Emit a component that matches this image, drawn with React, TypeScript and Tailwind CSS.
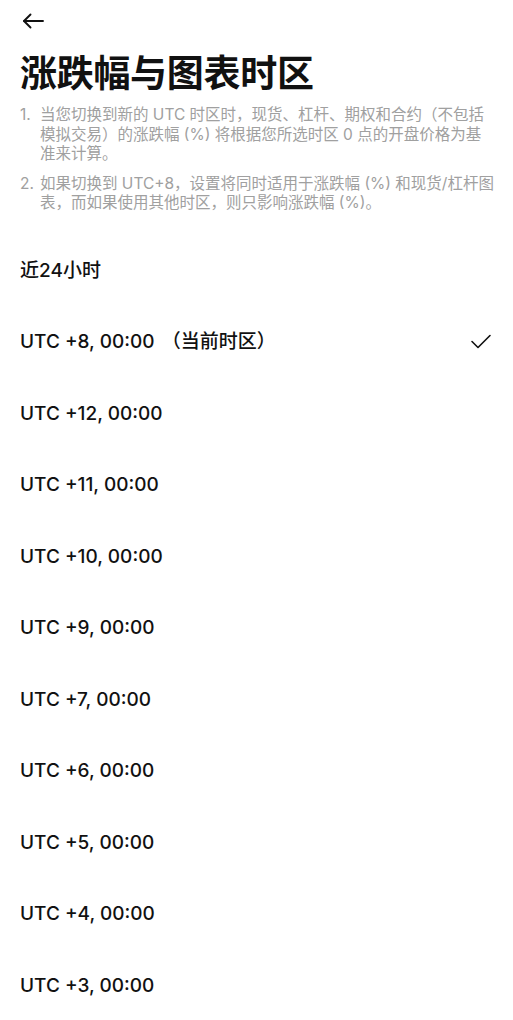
import { type ReactNode } from "react";

const zones = [
  "UTC +12, 00:00",
  "UTC +11, 00:00",
  "UTC +10, 00:00",
  "UTC +9, 00:00",
  "UTC +7, 00:00",
  "UTC +6, 00:00",
  "UTC +5, 00:00",
  "UTC +4, 00:00",
  "UTC +3, 00:00",
];

function BackArrow() {
  return (
    <svg width="22" height="16" viewBox="0 0 22 16" fill="none" stroke="#111" strokeWidth="1.9" strokeLinecap="round" strokeLinejoin="round">
      <path d="M2 8h19" />
      <path d="M8.5 1.5 2 8l6.5 6.5" />
    </svg>
  );
}

function CheckMark() {
  return (
    <svg width="22" height="16" viewBox="0 0 22 16" fill="none" stroke="#111" strokeWidth="1.6" strokeLinecap="round" strokeLinejoin="round">
      <path d="M2 7.5l6 6L20 1.5" />
    </svg>
  );
}

function Note({ n, children }: { n: number; children: ReactNode }) {
  return (
    <li className="flex">
      <span className="w-5 shrink-0">{n}.</span>
      <span className="flex-1">{children}</span>
    </li>
  );
}

function Row({ label, active }: { label: ReactNode; active?: boolean }) {
  return (
    <div className="flex h-[71.5px] items-center justify-between px-5">
      <span className="text-[19px] font-medium text-[#111]">{label}</span>
      {active && (
        <span className="mr-[1px]">
          <CheckMark />
        </span>
      )}
    </div>
  );
}

export default function App() {
  return (
    <div
      className="h-[1020px] w-[513px] overflow-hidden bg-white text-[#111]"
      style={{ fontFamily: "Inter, 'Noto Sans CJK SC', sans-serif" }}
    >
      {/* top bar */}
      <div className="flex h-[42px] items-center pl-[22px]">
        <BackArrow />
      </div>

      <h1 className="mt-[10px] px-5 text-[37px] font-bold leading-[44px] tracking-[-0.3px]">
        涨跌幅与图表时区
      </h1>

      <ol className="mt-[9px] flex flex-col gap-[10px] pl-5 pr-[12px] text-[15.5px] leading-[19.5px] text-[#a0a0a0]">
        <Note n={1}>
          当您切换到新的 UTC 时区时，现货、杠杆、期权和合约（不包括
          <br />
          模拟交易）的涨跌幅 (%) 将根据您所选时区 0 点的开盘价格为基
          <br />
          准来计算。
        </Note>
        <Note n={2}>
          如果切换到 UTC+8，设置将同时适用于涨跌幅 (%) 和现货/杠杆图表，而如果使用其他时区，则只影响涨跌幅 (%)。
        </Note>
      </ol>

      <div className="mt-[22.5px]">
        <Row label="近24小时" />
        <Row
          label={
            <>
              UTC +8, 00:00 <span className="ml-[2px]">（当前时区）</span>
            </>
          }
          active
        />
        {zones.map((z) => (
          <Row key={z} label={z} />
        ))}
      </div>
    </div>
  );
}
